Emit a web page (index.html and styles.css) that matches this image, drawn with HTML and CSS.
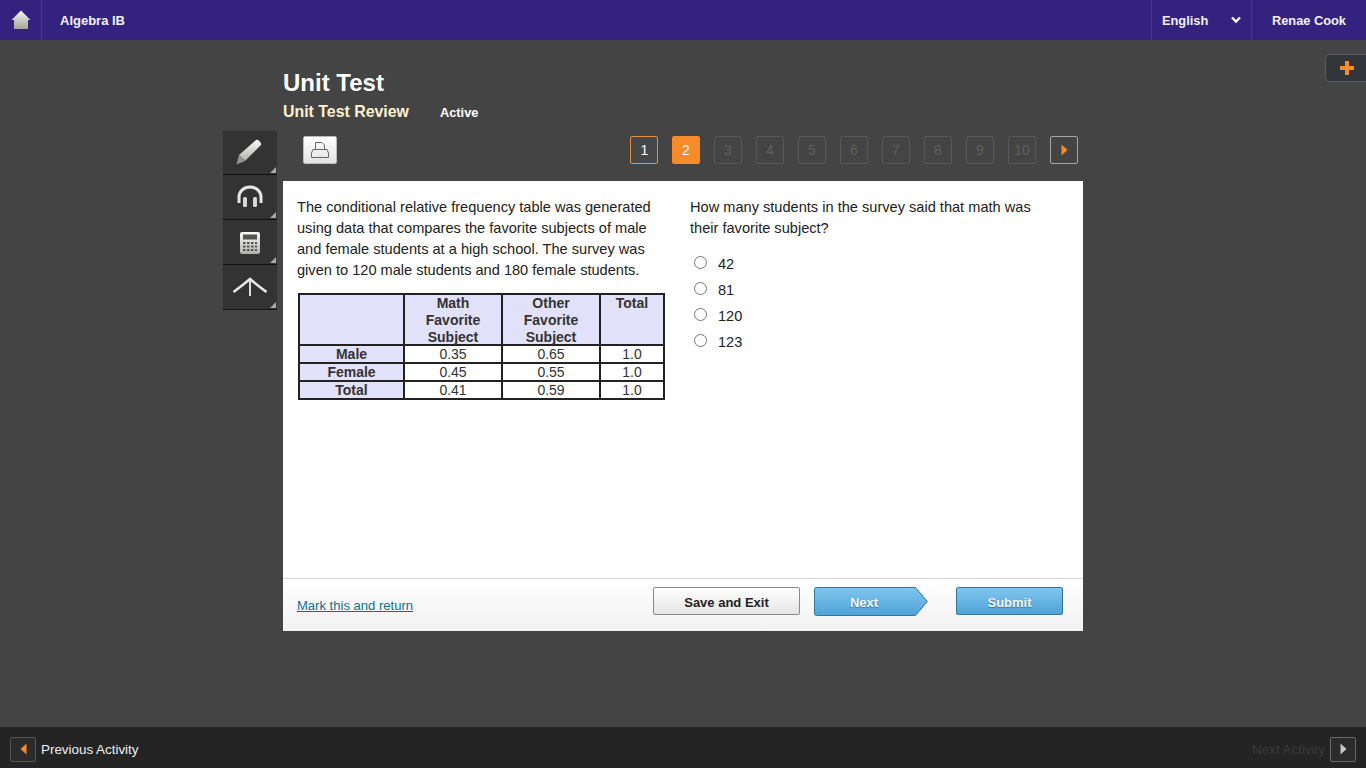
FILE: index.html
```html
<!DOCTYPE html>
<html lang="en">
<head>
<meta charset="utf-8">
<title>Unit Test</title>
<link rel="stylesheet" href="styles.css">
</head>
<body>
<div class="page">
  <header class="topbar">
    <a class="home"><svg width="20" height="20" viewBox="0 0 20 20"><defs><linearGradient id="hg" x1="0" y1="0" x2="0" y2="1"><stop offset="0" stop-color="#f6f6f6"/><stop offset="1" stop-color="#a4a49c"/></linearGradient></defs><path d="M10 0.500 L19.500 10 L17 10 L17 19 L3 19 L3 10 L0.500 10 Z" fill="url(#hg)"/></svg></a>
    <div class="course">Algebra IB</div>
    <div class="lang">English<svg width="10" height="8" viewBox="0 0 10 8"><path d="M1 1.500 L5 5.500 L9 1.500" fill="none" stroke="#fff" stroke-width="2.400"/></svg></div>
    <div class="user">Renae Cook</div>
  </header>

  <main class="main">
    <div class="plus-tab"><svg width="14" height="14" viewBox="0 0 14 14"><path d="M5 0h4v5h5v4H9v5H5V9H0V5h5z" fill="#f68b2a"/></svg></div>
    <div class="stage">
      <div class="headings">
        <h1 class="title">Unit Test</h1>
        <div class="subline"><span class="subtitle">Unit Test Review</span><span class="status">Active</span></div>
      </div>
      <div class="work">
        <nav class="tools">
          <div class="tool"><svg class="pencil" width="30" height="30" viewBox="0 0 30 30"><defs><linearGradient id="tg" x1="0" y1="0" x2="0" y2="1"><stop offset="0" stop-color="#fafafa"/><stop offset="1" stop-color="#b0b0ab"/></linearGradient></defs><path d="M22 3 C24 2 28 6 27 8 L11 24 L5 18 Z" fill="url(#tg)"/><path d="M5 18 L11 24 L2.500 27.500 Z" fill="#94948e"/></svg></div>
          <div class="tool"><svg width="28" height="24" viewBox="0 0 28 24"><path d="M3 18 V12 A11 10 0 0 1 25 12 V18" fill="none" stroke="#e6e6e6" stroke-width="3"/><rect x="7" y="12" width="4" height="10" rx="1.500" fill="#d8d8d8"/><rect x="17" y="12" width="4" height="10" rx="1.500" fill="#d8d8d8"/></svg></div>
          <div class="tool"><svg class="calc" width="22" height="24" viewBox="0 0 22 24"><rect x="1" y="1" width="20" height="22" rx="2" fill="url(#tg)"/><rect x="4" y="3.500" width="14" height="5" fill="#55554f"/><path d="M4 11h2.500v2H4zM8 11h2.500v2H8zM12 11h2.500v2H12zM16 11h2v2h-2zM4 14.500h2.500v2H4zM8 14.500h2.500v2H8zM12 14.500h2.500v2H12zM16 14.500h2v2h-2zM4 18h2.500v2H4zM8 18h2.500v2H8zM12 18h2.500v2H12zM16 18h2v2h-2z" fill="#55554f"/></svg></div>
          <div class="tool"><svg class="umbrella" width="36" height="22" viewBox="0 0 36 22"><path d="M1.500 16 Q11 9 18 3 Q25 9 34.500 16" fill="none" stroke="#e8e8e8" stroke-width="2.600"/><path d="M18 4 V20" stroke="#dcdcdc" stroke-width="2"/></svg></div>
        </nav>
        <div class="content">
          <div class="toolbar">
            <button class="print"><svg width="18" height="16" viewBox="0 0 18 16"><path d="M4.500 7 V0.500 H11 L13.500 3 V7 M2 7.500 H16 L17.500 11 V15.500 H0.500 V11 Z" fill="none" stroke="#666" stroke-width="1"/></svg></button>
            <div class="pager">
              <span class="pg visited">1</span>
              <span class="pg current">2</span>
              <span class="pg">3</span>
              <span class="pg">4</span>
              <span class="pg">5</span>
              <span class="pg">6</span>
              <span class="pg">7</span>
              <span class="pg">8</span>
              <span class="pg">9</span>
              <span class="pg">10</span>
              <span class="pg forward"><svg width="7" height="12" viewBox="0 0 7 12"><path d="M0.500 0.500 L6.500 6 L0.500 11.500 Z" fill="#f68b2a"/></svg></span>
            </div>
          </div>
          <section class="card">
            <div class="columns">
              <div class="col-left">
                <p class="stem">The conditional relative frequency table was generated using data that compares the favorite subjects of male and female students at a high school. The survey was given to 120 male students and 180 female students.</p>
                <table class="freq">
                  <colgroup><col class="c1"><col class="c2"><col class="c3"><col class="c4"></colgroup>
                  <tr class="head"><th></th><th><div class="hd">Math<br>Favorite<br>Subject</div></th><th><div class="hd">Other<br>Favorite<br>Subject</div></th><th><div class="hd">Total</div></th></tr>
                  <tr><th>Male</th><td>0.35</td><td>0.65</td><td>1.0</td></tr>
                  <tr><th>Female</th><td>0.45</td><td>0.55</td><td>1.0</td></tr>
                  <tr><th>Total</th><td>0.41</td><td>0.59</td><td>1.0</td></tr>
                </table>
              </div>
              <div class="col-right">
                <p class="stem">How many students in the survey said that math was their favorite subject?</p>
                <div class="choices">
                  <label class="choice"><span class="radio"></span>42</label>
                  <label class="choice"><span class="radio"></span>81</label>
                  <label class="choice"><span class="radio"></span>120</label>
                  <label class="choice"><span class="radio"></span>123</label>
                </div>
              </div>
            </div>
            <div class="card-foot">
              <a class="mark">Mark this and return</a>
              <div class="actions">
                <button class="btn save">Save and Exit</button>
                <button class="btn next"><svg class="next-shape" width="114" height="29" viewBox="0 0 114 29"><defs><linearGradient id="bg" x1="0" y1="0" x2="0" y2="1"><stop offset="0" stop-color="#7fc6f0"/><stop offset="1" stop-color="#4fa3d8"/></linearGradient></defs><path d="M2.500 0.500 H101.500 L113.300 14.500 L101.500 28.500 H2.500 Q0.500 28.500 0.500 26.500 V2.500 Q0.500 0.500 2.500 0.500 Z" fill="url(#bg)" stroke="#33759f"/></svg><span class="next-label">Next</span></button>
                <button class="btn submit">Submit</button>
              </div>
            </div>
          </section>
        </div>
      </div>
    </div>
  </main>

  <footer class="bottombar">
    <div class="prev"><span class="nav-btn"><svg width="7" height="12" viewBox="0 0 7 12"><path d="M6.500 0.500 L0.500 6 L6.500 11.500 Z" fill="#f68b2a"/></svg></span>Previous Activity</div>
    <div class="nextact">Next Activity<span class="nav-btn light"><svg width="7" height="12" viewBox="0 0 7 12"><path d="M0.500 0.500 L6.500 6 L0.500 11.500 Z" fill="#c8c8c8"/></svg></span></div>
  </footer>
</div>
</body>
</html>
```
FILE: styles.css
```css
* { box-sizing: border-box; }
html, body { margin: 0; padding: 0; height: 100%; }
body { font-family: "Liberation Sans", Arial, sans-serif; color: #222; background: #444; }
.page { width: 1366px; height: 768px; display: flex; flex-direction: column; overflow: hidden; }

.topbar { position: relative; height: 40px; flex: none; display: flex; align-items: stretch; background: #33237f; box-shadow: 0 1px 2px rgba(0,0,0,.35); color: #f2f0fa; font-size: 12.8px; font-weight: bold; }
.home { width: 42px; display: flex; align-items: center; justify-content: center; border-right: 1px solid #46389a; padding-left: 1px; padding-bottom: 1px; }
.course { padding-left: 18px; flex: 1; display: flex; align-items: center; font-size: 13px; }
.lang { width: 101px; display: flex; align-items: center; justify-content: space-between; padding: 0 10px; border-left: 1px solid #46389a; border-right: 1px solid #46389a; }
.user { width: 114px; padding-left: 20px; display: flex; align-items: center; white-space: nowrap; }

.main { flex: 1; position: relative; background: #444; }
.plus-tab { position: absolute; right: 0; top: 14px; width: 41px; height: 28px; display: flex; align-items: center; justify-content: center; padding-left: 1px; background: #32363a; border: 1px solid #5b5f63; border-right: 0; border-radius: 5px 0 0 5px; }
.stage { width: 860px; margin-left: 223px; }
.headings { padding: 28px 0 0 60px; height: 91px; }
.title { margin: 0; font-size: 24px; line-height: 30px; font-weight: bold; color: #fff; }
.subline { display: flex; align-items: baseline; margin-top: 2px; line-height: 24px; }
.subtitle { font-size: 15.9px; font-weight: bold; color: #fdf1cd; width: 157px; }
.status { font-size: 12.8px; font-weight: bold; color: #fff; }

.work { display: flex; }
.tools { width: 60px; flex: none; display: flex; flex-direction: column; }
.tool { position: relative; width: 54px; height: 45px; display: flex; align-items: center; justify-content: center; background: #333; border-bottom: 1px solid #111; }
.tool:first-child { height: 44px; }
.tool::after { content: ""; position: absolute; right: 1px; bottom: 1px; border-style: solid; border-width: 0 0 6px 6px; border-color: transparent transparent #a8a8a8 transparent; }
.pencil { margin: -2px 2px 0 0; }
.calc { margin-top: 2px; }
.umbrella { margin: 0 0 1px; }

.content { width: 800px; }
.toolbar { height: 50px; display: flex; align-items: flex-start; justify-content: space-between; padding: 5px 5px 0 20px; }
.print { width: 34px; height: 28px; padding: 0; display: flex; align-items: center; justify-content: center; background: linear-gradient(#fff, #e3e3e3); border: 1px solid #bbb; border-radius: 2px; }
.pager { display: flex; gap: 14px; }
.pg { width: 28px; height: 28px; display: flex; align-items: center; justify-content: center; font-size: 14px; color: #5f5f5f; border: 1px solid #585858; border-radius: 2px; }
.pg.visited { color: #fff; border-color: #e58f3f; background: #474747; padding-left: 1px; }
.pg.current { color: #fff; border-color: #f68b2a; background: #f68b2a; }
.pg.forward { border-color: #a6a6a6; }

.card { width: 800px; height: 450px; background: #fff; display: flex; flex-direction: column; }
.columns { flex: 1; display: flex; padding: 16px 14px 0; }
.col-left { width: 393px; flex: none; }
.col-right { flex: 1; }
.stem { margin: 0; font-size: 14.6px; line-height: 21px; color: #222; }
.col-left .stem { width: 370px; }
.col-right .stem { width: 360px; }

.freq { margin: 12px 0 0 1px; width: 367px; table-layout: fixed; border-collapse: collapse; border: 2px solid #222; font-size: 14px; color: #333; }
.freq .c1 { width: 105px; }
.freq .c2, .freq .c3 { width: 98px; }
.freq th, .freq td { border: 2px solid #222; padding: 0; height: 18px; line-height: 15px; text-align: center; vertical-align: middle; }
.freq th { background: #e1e1fa; font-weight: bold; }
.freq td { background: #fff; }
.freq .head th { height: 51px; vertical-align: top; }
.hd { height: 49px; line-height: 17px; }

.choices { margin-top: 14px; display: flex; flex-direction: column; gap: 5px; }
.choice { display: flex; align-items: center; height: 21px; font-size: 14.6px; color: #222; }
.radio { width: 13px; height: 13px; margin: -3px 11px 0 4px; border: 1px solid #767676; border-radius: 50%; background: #fff; }

.card-foot { height: 53px; flex: none; display: flex; justify-content: space-between; padding: 8px 20px 0 14px; background: linear-gradient(#fff, #f2f2f2); border-top: 1px solid #d8d8d8; }
.mark { margin-top: 11px; font-size: 13.05px; line-height: 16px; color: #0b6e92; text-decoration: underline; }
.actions { display: flex; }
.btn { height: 29px; padding: 1px 0 0; font: bold 13px "Liberation Sans", Arial, sans-serif; border-radius: 2px; }
.save { width: 147px; height: 28px; padding-top: 2px; background: linear-gradient(#fff, #e4e4e4); border: 1px solid #8a8a8a; color: #222; }
.next { position: relative; width: 114px; margin: 0 28px 0 14px; background: none; border: 0; color: #f4f8fb; text-shadow: 0 1px 1px #3f6f90; }
.next-shape { position: absolute; left: 0; top: 0; }
.next-label { position: relative; display: block; width: 100px; }
.submit { width: 107px; height: 28px; padding-top: 2px; background: linear-gradient(#7fc6f0, #4fa3d8); border: 1px solid #33759f; color: #f4f8fb; text-shadow: 0 1px 1px #3f6f90; }

.bottombar { height: 41px; flex: none; display: flex; align-items: center; justify-content: space-between; padding: 3px 10px 0; background: #242424; box-shadow: 0 -2px 3px rgba(0,0,0,.12); font-size: 13.4px; }
.prev { display: flex; align-items: center; gap: 5px; color: #f0f0f0; }
.nextact { display: flex; align-items: center; gap: 5px; color: #3a3a3a; }
.nav-btn { width: 26px; height: 25px; display: flex; align-items: center; justify-content: center; background: #2b2b2b; border: 1px solid #555; border-radius: 2px; }
.nav-btn.light { border-color: #6a6a6a; }
```
